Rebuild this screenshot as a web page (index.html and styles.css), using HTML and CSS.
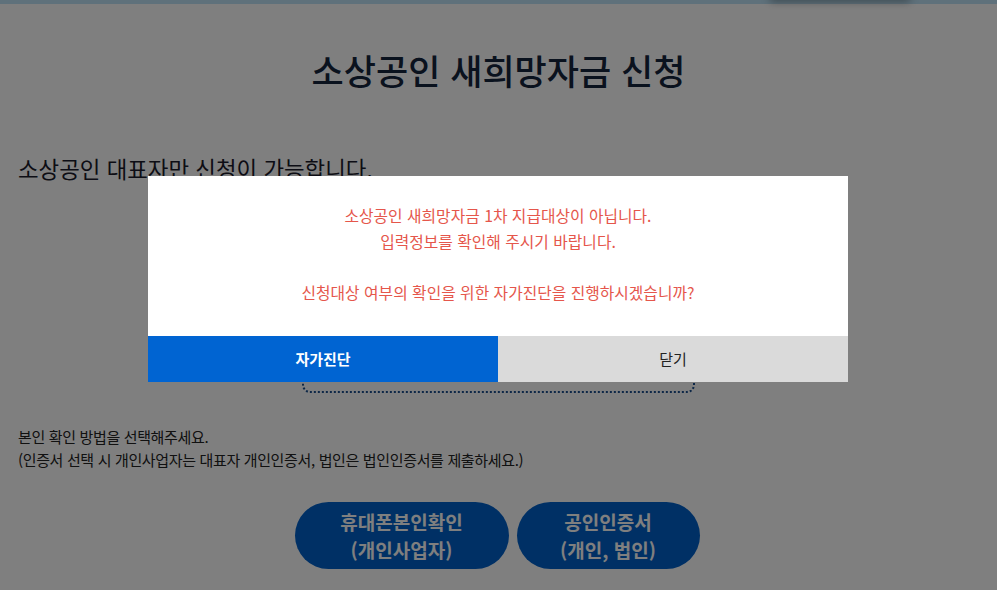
FILE: index.html
```html
<!DOCTYPE html>
<html lang="ko">
<head>
<meta charset="utf-8">
<title>소상공인 새희망자금 신청</title>
<link rel="stylesheet" href="styles.css">
</head>
<body>
<div class="topbar"><div class="topmenu"></div></div>
<main class="wrap">
  <h1 class="title">소상공인 새희망자금 신청</h1>
  <p class="lead">소상공인 대표자만 신청이 가능합니다.</p>
  <div class="dotbox"></div>
  <p class="notice">본인 확인 방법을 선택해주세요.<br>(인증서 선택 시 개인사업자는 대표자 개인인증서, 법인은 법인인증서를 제출하세요.)</p>
  <div class="choices">
    <button class="choice choice-phone">휴대폰본인확인<br>(개인사업자)</button>
    <button class="choice choice-cert">공인인증서<br>(개인, 법인)</button>
  </div>
</main>
<div class="overlay"></div>
<div class="modal">
  <div class="modal-body">
    <p>소상공인 새희망자금 1차 지급대상이 아닙니다.<br>입력정보를 확인해 주시기 바랍니다.<br><br>신청대상 여부의 확인을 위한 자가진단을 진행하시겠습니까?</p>
  </div>
  <div class="modal-actions">
    <button class="btn btn-primary">자가진단</button>
    <button class="btn btn-close">닫기</button>
  </div>
</div>
</body>
</html>
```
FILE: styles.css
```css
* { box-sizing: border-box; }
html, body { margin: 0; padding: 0; }
body {
  width: 997px;
  height: 590px;
  overflow: hidden;
  background: #fff;
  font-family: "Noto Sans CJK KR", "Noto Sans", sans-serif;
  color: #1c1c1c;
  position: relative;
}
.topbar {
  height: 4px;
  background: #bee2f6;
  position: relative;
}
.topmenu {
  position: absolute;
  left: 770px;
  top: -10px;
  width: 140px;
  height: 10px;
  box-shadow: 0 2px 8px rgba(0,0,0,0.35);
  background: #aacfe4;
}
.wrap {
  padding: 0 18px;
}
.title {
  margin: 42px 0 0;
  text-align: center;
  font-size: 35px;
  line-height: 48px;
  font-weight: 500;
  color: #14253d;
}
.lead {
  margin: 59px 0 0;
  font-size: 22.4px;
  line-height: 30px;
  font-weight: 400;
  color: #1a1a2a;
}
.dotbox {
  width: 393px;
  height: 186px;
  margin: 24px 0 0 284px;
  border: 2px dotted #1a4f8f;
  border-radius: 8px;
}
.notice {
  margin: 32px 0 0;
  font-size: 15px;
  line-height: 23px;
  color: #222;
  letter-spacing: -0.35px;
}
.choices {
  margin-top: 31px;
  display: flex;
  justify-content: center;
  gap: 8px;
  padding-right: 3px;
}
.choice {
  height: 67px;
  border: 0;
  border-radius: 34px;
  background: #0060ca;
  color: #fff;
  font-family: inherit;
  font-size: 19px;
  line-height: 28px;
  font-weight: 700;
  padding: 0;
}
.choice-phone { width: 214px; }
.choice-cert { width: 183px; }
.overlay {
  position: absolute;
  inset: 0;
  background: rgba(0,0,0,0.5);
}
.modal {
  position: absolute;
  left: 148px;
  top: 176px;
  width: 700px;
  background: #fff;
}
.modal-body {
  padding: 27px 20px 30px;
  text-align: center;
}
.modal-body p {
  margin: 0;
  font-size: 15.8px;
  line-height: 25.7px;
  color: #e5564b;
}
.modal-actions {
  display: flex;
}
.btn {
  flex: 1;
  height: 46px;
  border: 0;
  font-family: inherit;
  font-size: 15px;
  padding: 0;
}
.btn-primary {
  background: #0064d2;
  color: #fff;
  font-weight: 700;
}
.btn-close {
  background: #dadada;
  color: #222;
  font-weight: 400;
}
```
